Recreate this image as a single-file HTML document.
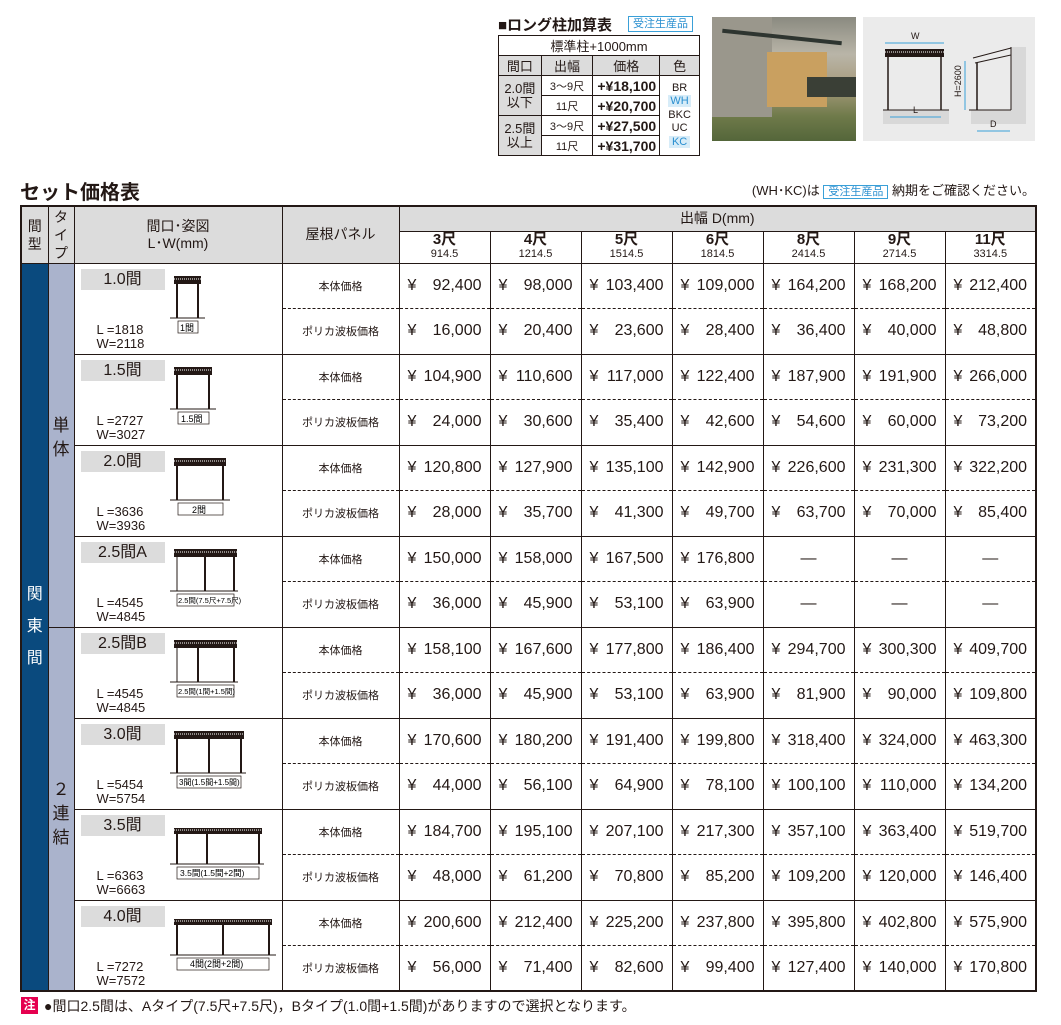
<!DOCTYPE html>
<html><head><meta charset="utf-8">
<style>
*{margin:0;padding:0;box-sizing:border-box}
body{width:1061px;height:1025px;background:#fff;font-family:"Liberation Sans","Noto Sans CJK JP",sans-serif;color:#231815;position:relative;overflow:hidden}
.abs{position:absolute}
table{border-collapse:collapse}
.lt{position:absolute;left:498px;top:35px;width:202px;font-size:13px}
.lt td{border:1px solid #231815;text-align:center;height:20px;padding:0}
.lt .p{font-weight:bold;font-size:14px;text-align:right;padding-right:3px}
.badge{border:1px solid #3aa0d8;color:#2a8fd0;font-size:11px;background:#fff;padding:0 4px;line-height:14px}
.mt{position:absolute;left:20px;top:205px;width:1015px;table-layout:fixed;border:2px solid #231815}
.mt td,.mt th{border:1px solid #231815;padding:0;text-align:center;font-weight:normal}
.mt th{background:#dcdcdc;font-size:14px;line-height:17px}
.mt .sz{background:#fff;font-size:15px;font-weight:bold;line-height:14px}
.mt .sz small{display:block;font-size:11px;font-weight:normal}
.k{font-size:11px}
.pr{font-size:16px;height:45.5px}
.pr div{display:flex;justify-content:space-between;padding:0 8px 0 8px}
.d1 td.pr,.d1 td.k{border-bottom:1px dashed #231815}
.d2 td.pr,.d2 td.k{border-top:1px dashed #231815}
.g{background:#0a4a7e;color:#fff;font-size:16px;font-weight:bold;line-height:32px;vertical-align:middle}
.t{background:#aab3cc;font-size:17px;line-height:22px}
.m{position:relative;text-align:left!important;vertical-align:top}
.m .lab{position:absolute;left:6px;top:5px;width:84px;height:21px;background:#dcdcdc;font-size:16px;line-height:21px;text-align:center}
.m .lw{position:absolute;left:22px;top:59px;font-size:13px;line-height:14px}
.m svg{position:absolute;left:95px;top:10px}
</style></head><body>
<div class="abs" style="left:498px;top:14px;font-size:15px;font-weight:bold">■ロング柱加算表</div>
<div class="abs badge" style="left:628px;top:16px">受注生産品</div>
<table class="lt">
<tr><td colspan="4" style="height:18px">標準柱+1000mm</td></tr>
<tr style="background:#dcdcdc"><td style="width:43px">間口</td><td style="width:52px">出幅</td><td style="width:67px">価格</td><td style="width:40px">色</td></tr>
<tr><td rowspan="2" style="background:#dcdcdc;line-height:14px">2.0間<br>以下</td><td style="font-size:11px">3～9尺</td><td class="p">+¥18,100</td><td rowspan="4" style="font-size:11px;line-height:13.5px">BR<br><span style="background:#d7ecf8;color:#2a8fd0;padding:0 2px">WH</span><br>BKC<br>UC<br><span style="background:#d7ecf8;color:#2a8fd0;padding:0 3px">KC</span></td></tr>
<tr><td style="font-size:11px">11尺</td><td class="p">+¥20,700</td></tr>
<tr><td rowspan="2" style="background:#dcdcdc;line-height:14px">2.5間<br>以上</td><td style="font-size:11px">3～9尺</td><td class="p">+¥27,500</td></tr>
<tr><td style="font-size:11px">11尺</td><td class="p">+¥31,700</td></tr>
</table>
<div class="abs" style="left:712px;top:17px;width:144px;height:124px;background:linear-gradient(180deg,#8a8a80 0%,#b9b5a8 30%,#a89c7e 55%,#6f7a4a 80%,#54663a 100%)">
<div class="abs" style="left:0;top:0;width:60px;height:100px;background:#9a978c"></div>
<div class="abs" style="left:10px;top:18px;width:120px;height:4px;background:#2e3530;transform:rotate(6deg)"></div>
<div class="abs" style="left:55px;top:35px;width:60px;height:55px;background:#c9a060"></div>
<div class="abs" style="left:95px;top:60px;width:49px;height:20px;background:#3a3f36"></div>
</div>
<div class="abs" style="left:863px;top:17px;width:172px;height:124px;background:#ebebeb">
<svg width="172" height="124" font-family="Liberation Sans" font-size="9">
<line x1="22" y1="26" x2="81" y2="26" stroke="#3aa0d8"/><text x="48" y="22" fill="#231815">W</text>
<rect x="22" y="32" width="59" height="8" fill="#231815"/><line x1="22" y1="35" x2="81" y2="35" stroke="#fff" stroke-dasharray="1 1"/>
<line x1="25" y1="40" x2="25" y2="93" stroke="#231815" stroke-width="1.5"/><line x1="78" y1="40" x2="78" y2="93" stroke="#231815" stroke-width="1.5"/>
<rect x="20" y="93" width="66" height="14" fill="#d8d8d8"/><line x1="20" y1="93" x2="86" y2="93" stroke="#231815"/>
<line x1="27" y1="100" x2="78" y2="100" stroke="#3aa0d8"/><text x="50" y="96" fill="#231815">L</text>
<line x1="102" y1="44" x2="102" y2="93" stroke="#3aa0d8"/><text x="98" y="80" fill="#231815" transform="rotate(-90 98 80)">H=2600</text>
<polyline points="110,41 148,31 148,38 112,46" fill="none" stroke="#231815"/>
<line x1="114" y1="46" x2="114" y2="93" stroke="#231815" stroke-width="1.5"/>
<rect x="148" y="30" width="15" height="77" fill="#d8d8d8"/><line x1="148" y1="30" x2="148" y2="93" stroke="#231815"/>
<rect x="108" y="93" width="40" height="14" fill="#d8d8d8"/><line x1="106" y1="93" x2="148" y2="93" stroke="#231815"/>
<line x1="114" y1="114" x2="147" y2="114" stroke="#3aa0d8"/><text x="127" y="110" fill="#231815">D</text>
</svg></div>

<div class="abs" style="left:20px;top:176px;font-size:20px;font-weight:bold">セット価格表</div>
<div class="abs" style="right:26px;top:180px;font-size:13px">(WH･KC)は <span class="badge">受注生産品</span> 納期をご確認ください。</div>

<table class="mt">
<colgroup><col style="width:27px"><col style="width:26px"><col style="width:208px"><col style="width:117px"><col style="width:91px"><col style="width:91px"><col style="width:91px"><col style="width:91px"><col style="width:91px"><col style="width:91px"><col style="width:91px"></colgroup>
<tr style="height:25px"><th rowspan="2" style="line-height:18px">間<br>型</th><th rowspan="2" style="line-height:18px">タ<br>イ<br>プ</th><th rowspan="2">間口･姿図<br>L･W(mm)</th><th rowspan="2">屋根パネル</th><th colspan="7">出幅 D(mm)</th></tr>
<tr style="height:32px"><th class="sz">3尺<small>914.5</small></th><th class="sz">4尺<small>1214.5</small></th><th class="sz">5尺<small>1514.5</small></th><th class="sz">6尺<small>1814.5</small></th><th class="sz">8尺<small>2414.5</small></th><th class="sz">9尺<small>2714.5</small></th><th class="sz">11尺<small>3314.5</small></th></tr>

<tr class="d1"><td rowspan="16" class="g">関<br>東<br>間</td><td rowspan="8" class="t" style="vertical-align:top;padding-top:150px;line-height:24px">単<br>体</td>
<td rowspan="2" class="m"><div class="lab">1.0間</div><div class="lw">L =1818<br>W=2118</div>
<svg width="100" height="70"><rect x="4" y="2" width="27" height="8" fill="#231815"/><line x1="4" y1="5" x2="31" y2="5" stroke="#fff" stroke-dasharray="1 1"/><line x1="7" y1="10" x2="7" y2="44" stroke="#231815" stroke-width="2"/><line x1="28" y1="10" x2="28" y2="44" stroke="#231815" stroke-width="2"/><line x1="0" y1="44" x2="35" y2="44" stroke="#231815"/><rect x="8" y="47" width="20" height="12" fill="none" stroke="#231815" stroke-width=".7"/><text x="10" y="57" font-size="9">1間</text></svg></td>
<td class="k">本体価格</td><td class="pr"><div><span>¥</span><span>92,400</span></div></td><td class="pr"><div><span>¥</span><span>98,000</span></div></td><td class="pr"><div><span>¥</span><span>103,400</span></div></td><td class="pr"><div><span>¥</span><span>109,000</span></div></td><td class="pr"><div><span>¥</span><span>164,200</span></div></td><td class="pr"><div><span>¥</span><span>168,200</span></div></td><td class="pr"><div><span>¥</span><span>212,400</span></div></td></tr>
<tr class="d2"><td class="k">ポリカ波板価格</td><td class="pr"><div><span>¥</span><span>16,000</span></div></td><td class="pr"><div><span>¥</span><span>20,400</span></div></td><td class="pr"><div><span>¥</span><span>23,600</span></div></td><td class="pr"><div><span>¥</span><span>28,400</span></div></td><td class="pr"><div><span>¥</span><span>36,400</span></div></td><td class="pr"><div><span>¥</span><span>40,000</span></div></td><td class="pr"><div><span>¥</span><span>48,800</span></div></td></tr>

<tr class="d1"><td rowspan="2" class="m"><div class="lab">1.5間</div><div class="lw">L =2727<br>W=3027</div>
<svg width="100" height="70"><rect x="4" y="2" width="38" height="8" fill="#231815"/><line x1="4" y1="5" x2="42" y2="5" stroke="#fff" stroke-dasharray="1 1"/><line x1="7" y1="10" x2="7" y2="44" stroke="#231815" stroke-width="2"/><line x1="39" y1="10" x2="39" y2="44" stroke="#231815" stroke-width="2"/><line x1="0" y1="44" x2="46" y2="44" stroke="#231815"/><rect x="8" y="47" width="31" height="12" fill="none" stroke="#231815" stroke-width=".7"/><text x="11" y="57" font-size="9">1.5間</text></svg></td>
<td class="k">本体価格</td><td class="pr"><div><span>¥</span><span>104,900</span></div></td><td class="pr"><div><span>¥</span><span>110,600</span></div></td><td class="pr"><div><span>¥</span><span>117,000</span></div></td><td class="pr"><div><span>¥</span><span>122,400</span></div></td><td class="pr"><div><span>¥</span><span>187,900</span></div></td><td class="pr"><div><span>¥</span><span>191,900</span></div></td><td class="pr"><div><span>¥</span><span>266,000</span></div></td></tr>
<tr class="d2"><td class="k">ポリカ波板価格</td><td class="pr"><div><span>¥</span><span>24,000</span></div></td><td class="pr"><div><span>¥</span><span>30,600</span></div></td><td class="pr"><div><span>¥</span><span>35,400</span></div></td><td class="pr"><div><span>¥</span><span>42,600</span></div></td><td class="pr"><div><span>¥</span><span>54,600</span></div></td><td class="pr"><div><span>¥</span><span>60,000</span></div></td><td class="pr"><div><span>¥</span><span>73,200</span></div></td></tr>

<tr class="d1"><td rowspan="2" class="m"><div class="lab">2.0間</div><div class="lw">L =3636<br>W=3936</div>
<svg width="100" height="70"><rect x="4" y="2" width="52" height="8" fill="#231815"/><line x1="4" y1="5" x2="56" y2="5" stroke="#fff" stroke-dasharray="1 1"/><line x1="7" y1="10" x2="7" y2="44" stroke="#231815" stroke-width="2"/><line x1="53" y1="10" x2="53" y2="44" stroke="#231815" stroke-width="2"/><line x1="0" y1="44" x2="60" y2="44" stroke="#231815"/><rect x="8" y="47" width="45" height="12" fill="none" stroke="#231815" stroke-width=".7"/><text x="22" y="57" font-size="9">2間</text></svg></td>
<td class="k">本体価格</td><td class="pr"><div><span>¥</span><span>120,800</span></div></td><td class="pr"><div><span>¥</span><span>127,900</span></div></td><td class="pr"><div><span>¥</span><span>135,100</span></div></td><td class="pr"><div><span>¥</span><span>142,900</span></div></td><td class="pr"><div><span>¥</span><span>226,600</span></div></td><td class="pr"><div><span>¥</span><span>231,300</span></div></td><td class="pr"><div><span>¥</span><span>322,200</span></div></td></tr>
<tr class="d2"><td class="k">ポリカ波板価格</td><td class="pr"><div><span>¥</span><span>28,000</span></div></td><td class="pr"><div><span>¥</span><span>35,700</span></div></td><td class="pr"><div><span>¥</span><span>41,300</span></div></td><td class="pr"><div><span>¥</span><span>49,700</span></div></td><td class="pr"><div><span>¥</span><span>63,700</span></div></td><td class="pr"><div><span>¥</span><span>70,000</span></div></td><td class="pr"><div><span>¥</span><span>85,400</span></div></td></tr>

<tr class="d1"><td rowspan="2" class="m"><div class="lab">2.5間A</div><div class="lw">L =4545<br>W=4845</div>
<svg width="100" height="70"><rect x="4" y="2" width="63" height="8" fill="#231815"/><line x1="4" y1="5" x2="67" y2="5" stroke="#fff" stroke-dasharray="1 1"/><line x1="7" y1="10" x2="7" y2="44" stroke="#231815" stroke-width="1"/><line x1="35" y1="10" x2="35" y2="44" stroke="#231815" stroke-width="2"/><line x1="64" y1="10" x2="64" y2="44" stroke="#231815" stroke-width="2"/><line x1="0" y1="44" x2="68" y2="44" stroke="#231815"/><rect x="7" y="47" width="57" height="12" fill="none" stroke="#231815" stroke-width=".7"/><text x="8" y="56" font-size="7.5">2.5間(7.5尺+7.5尺)</text></svg></td>
<td class="k">本体価格</td><td class="pr"><div><span>¥</span><span>150,000</span></div></td><td class="pr"><div><span>¥</span><span>158,000</span></div></td><td class="pr"><div><span>¥</span><span>167,500</span></div></td><td class="pr"><div><span>¥</span><span>176,800</span></div></td><td class="pr">—</td><td class="pr">—</td><td class="pr">—</td></tr>
<tr class="d2"><td class="k">ポリカ波板価格</td><td class="pr"><div><span>¥</span><span>36,000</span></div></td><td class="pr"><div><span>¥</span><span>45,900</span></div></td><td class="pr"><div><span>¥</span><span>53,100</span></div></td><td class="pr"><div><span>¥</span><span>63,900</span></div></td><td class="pr">—</td><td class="pr">—</td><td class="pr">—</td></tr>

<tr class="d1"><td rowspan="8" class="t" style="vertical-align:top;padding-top:150px;line-height:24px">２<br>連<br>結</td>
<td rowspan="2" class="m"><div class="lab">2.5間B</div><div class="lw">L =4545<br>W=4845</div>
<svg width="100" height="70"><rect x="4" y="2" width="63" height="8" fill="#231815"/><line x1="4" y1="5" x2="67" y2="5" stroke="#fff" stroke-dasharray="1 1"/><line x1="7" y1="10" x2="7" y2="44" stroke="#231815" stroke-width="1"/><line x1="28" y1="10" x2="28" y2="44" stroke="#231815" stroke-width="2"/><line x1="64" y1="10" x2="64" y2="44" stroke="#231815" stroke-width="2"/><line x1="0" y1="44" x2="68" y2="44" stroke="#231815"/><rect x="7" y="47" width="57" height="12" fill="none" stroke="#231815" stroke-width=".7"/><text x="8" y="56" font-size="7.5">2.5間(1間+1.5間)</text></svg></td>
<td class="k">本体価格</td><td class="pr"><div><span>¥</span><span>158,100</span></div></td><td class="pr"><div><span>¥</span><span>167,600</span></div></td><td class="pr"><div><span>¥</span><span>177,800</span></div></td><td class="pr"><div><span>¥</span><span>186,400</span></div></td><td class="pr"><div><span>¥</span><span>294,700</span></div></td><td class="pr"><div><span>¥</span><span>300,300</span></div></td><td class="pr"><div><span>¥</span><span>409,700</span></div></td></tr>
<tr class="d2"><td class="k">ポリカ波板価格</td><td class="pr"><div><span>¥</span><span>36,000</span></div></td><td class="pr"><div><span>¥</span><span>45,900</span></div></td><td class="pr"><div><span>¥</span><span>53,100</span></div></td><td class="pr"><div><span>¥</span><span>63,900</span></div></td><td class="pr"><div><span>¥</span><span>81,900</span></div></td><td class="pr"><div><span>¥</span><span>90,000</span></div></td><td class="pr"><div><span>¥</span><span>109,800</span></div></td></tr>

<tr class="d1"><td rowspan="2" class="m"><div class="lab">3.0間</div><div class="lw">L =5454<br>W=5754</div>
<svg width="100" height="70"><rect x="4" y="2" width="70" height="8" fill="#231815"/><line x1="4" y1="5" x2="74" y2="5" stroke="#fff" stroke-dasharray="1 1"/><line x1="7" y1="10" x2="7" y2="44" stroke="#231815" stroke-width="2"/><line x1="39" y1="10" x2="39" y2="44" stroke="#231815" stroke-width="2"/><line x1="71" y1="10" x2="71" y2="44" stroke="#231815" stroke-width="2"/><line x1="0" y1="44" x2="76" y2="44" stroke="#231815"/><rect x="7" y="47" width="64" height="12" fill="none" stroke="#231815" stroke-width=".7"/><text x="9" y="56" font-size="8">3間(1.5間+1.5間)</text></svg></td>
<td class="k">本体価格</td><td class="pr"><div><span>¥</span><span>170,600</span></div></td><td class="pr"><div><span>¥</span><span>180,200</span></div></td><td class="pr"><div><span>¥</span><span>191,400</span></div></td><td class="pr"><div><span>¥</span><span>199,800</span></div></td><td class="pr"><div><span>¥</span><span>318,400</span></div></td><td class="pr"><div><span>¥</span><span>324,000</span></div></td><td class="pr"><div><span>¥</span><span>463,300</span></div></td></tr>
<tr class="d2"><td class="k">ポリカ波板価格</td><td class="pr"><div><span>¥</span><span>44,000</span></div></td><td class="pr"><div><span>¥</span><span>56,100</span></div></td><td class="pr"><div><span>¥</span><span>64,900</span></div></td><td class="pr"><div><span>¥</span><span>78,100</span></div></td><td class="pr"><div><span>¥</span><span>100,100</span></div></td><td class="pr"><div><span>¥</span><span>110,000</span></div></td><td class="pr"><div><span>¥</span><span>134,200</span></div></td></tr>

<tr class="d1"><td rowspan="2" class="m"><div class="lab">3.5間</div><div class="lw">L =6363<br>W=6663</div>
<svg width="105" height="70"><rect x="4" y="8" width="88" height="6" fill="#231815"/><line x1="4" y1="10" x2="92" y2="10" stroke="#fff" stroke-dasharray="1 1"/><line x1="7" y1="14" x2="7" y2="44" stroke="#231815" stroke-width="2"/><line x1="37" y1="14" x2="37" y2="44" stroke="#231815" stroke-width="2"/><line x1="89" y1="14" x2="89" y2="44" stroke="#231815" stroke-width="2"/><line x1="0" y1="44" x2="94" y2="44" stroke="#231815"/><rect x="7" y="47" width="82" height="12" fill="none" stroke="#231815" stroke-width=".7"/><text x="10" y="56" font-size="8.5">3.5間(1.5間+2間)</text></svg></td>
<td class="k">本体価格</td><td class="pr"><div><span>¥</span><span>184,700</span></div></td><td class="pr"><div><span>¥</span><span>195,100</span></div></td><td class="pr"><div><span>¥</span><span>207,100</span></div></td><td class="pr"><div><span>¥</span><span>217,300</span></div></td><td class="pr"><div><span>¥</span><span>357,100</span></div></td><td class="pr"><div><span>¥</span><span>363,400</span></div></td><td class="pr"><div><span>¥</span><span>519,700</span></div></td></tr>
<tr class="d2"><td class="k">ポリカ波板価格</td><td class="pr"><div><span>¥</span><span>48,000</span></div></td><td class="pr"><div><span>¥</span><span>61,200</span></div></td><td class="pr"><div><span>¥</span><span>70,800</span></div></td><td class="pr"><div><span>¥</span><span>85,200</span></div></td><td class="pr"><div><span>¥</span><span>109,200</span></div></td><td class="pr"><div><span>¥</span><span>120,000</span></div></td><td class="pr"><div><span>¥</span><span>146,400</span></div></td></tr>

<tr class="d1"><td rowspan="2" class="m"><div class="lab">4.0間</div><div class="lw">L =7272<br>W=7572</div>
<svg width="110" height="70"><rect x="4" y="8" width="98" height="6" fill="#231815"/><line x1="4" y1="10" x2="102" y2="10" stroke="#fff" stroke-dasharray="1 1"/><line x1="7" y1="14" x2="7" y2="44" stroke="#231815" stroke-width="2"/><line x1="53" y1="14" x2="53" y2="44" stroke="#231815" stroke-width="2"/><line x1="99" y1="14" x2="99" y2="44" stroke="#231815" stroke-width="2"/><line x1="0" y1="44" x2="106" y2="44" stroke="#231815"/><rect x="7" y="47" width="92" height="12" fill="none" stroke="#231815" stroke-width=".7"/><text x="20" y="56" font-size="9">4間(2間+2間)</text></svg></td>
<td class="k">本体価格</td><td class="pr"><div><span>¥</span><span>200,600</span></div></td><td class="pr"><div><span>¥</span><span>212,400</span></div></td><td class="pr"><div><span>¥</span><span>225,200</span></div></td><td class="pr"><div><span>¥</span><span>237,800</span></div></td><td class="pr"><div><span>¥</span><span>395,800</span></div></td><td class="pr"><div><span>¥</span><span>402,800</span></div></td><td class="pr"><div><span>¥</span><span>575,900</span></div></td></tr>
<tr class="d2"><td class="k">ポリカ波板価格</td><td class="pr"><div><span>¥</span><span>56,000</span></div></td><td class="pr"><div><span>¥</span><span>71,400</span></div></td><td class="pr"><div><span>¥</span><span>82,600</span></div></td><td class="pr"><div><span>¥</span><span>99,400</span></div></td><td class="pr"><div><span>¥</span><span>127,400</span></div></td><td class="pr"><div><span>¥</span><span>140,000</span></div></td><td class="pr"><div><span>¥</span><span>170,800</span></div></td></tr>
</table>

<div class="abs" style="left:21px;top:997px;width:17px;height:17px;background:#e5004f;color:#fff;font-size:12px;font-weight:bold;text-align:center;line-height:17px">注</div>
<div class="abs" style="left:44px;top:996px;font-size:14px">●間口2.5間は、Aタイプ(7.5尺+7.5尺)，Bタイプ(1.0間+1.5間)がありますので選択となります。</div>
</body></html>
